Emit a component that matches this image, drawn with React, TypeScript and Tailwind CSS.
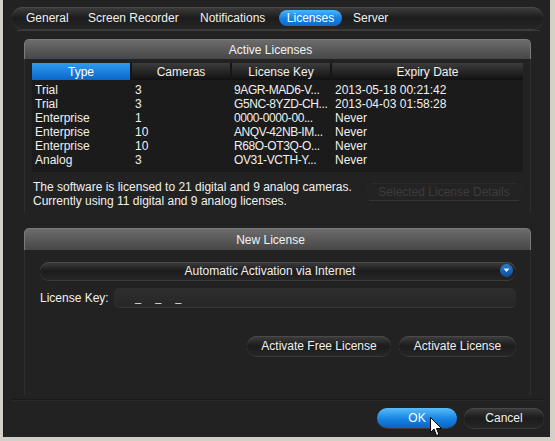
import React from "react";

const rows = [
  ["Trial", "3", "9AGR-MAD6-V...", "2013-05-18 00:21:42"],
  ["Trial", "3", "G5NC-8YZD-CH...", "2013-04-03 01:58:28"],
  ["Enterprise", "1", "0000-0000-00...", "Never"],
  ["Enterprise", "10", "ANQV-42NB-IM...", "Never"],
  ["Enterprise", "10", "R68O-OT3Q-O...", "Never"],
  ["Analog", "3", "OV31-VCTH-Y...", "Never"],
];

const darkPill =
  "rounded-full bg-gradient-to-b from-[#3e3e3e] via-[#1c1c1c] to-[#262626] shadow-[inset_0_1px_0_#4a4a4a,0_1px_0_#3a3a3a]";

function PanelHeader({ title, h }: { title: string; h: string }) {
  return (
    <div className={`${h} flex items-center justify-center pr-[14px] rounded-t-[5px] bg-gradient-to-b from-[#6c6c6c] to-[#474747] border-t border-x border-[#7a7a7a] text-[#f2f2f2]`}>
      {title}
    </div>
  );
}

export default function App() {
  return (
    <div className="w-[555px] h-[441px] bg-[#d4d0c8] pl-[3px] pr-[5px] pb-[4px] text-[12px] text-[#f0f0f0]" style={{ fontFamily: '"Liberation Sans", Arial, sans-serif' }}>
      <div className="relative h-full bg-[#222222] flex flex-col border-l border-[#1a1a1a]">
        {/* Tabs */}
        <div className={`mt-[7px] ml-[8px] mr-[7px] h-[22px] flex items-center pl-[14px] ${darkPill}`}>
          <span className="w-[62px]">General</span>
          <span className="w-[112px]">Screen Recorder</span>
          <span className="w-[79px]">Notifications</span>
          <span className="w-[63px] h-[16px] flex items-center justify-center rounded-full bg-gradient-to-b from-[#4cb3f7] via-[#1684e4] to-[#0d6bcc] text-white">
            Licenses
          </span>
          <span className="ml-[11px]">Server</span>
        </div>
        <div className="mt-[1px] ml-[13px] mr-[10px] h-px bg-[#3c3c3c]" />

        {/* Active Licenses */}
        <div className="mt-[8px] ml-[20px] w-[507px]">
          <PanelHeader title="Active Licenses" h="h-[20px]" />
          <div className="px-[7px] pt-[4px] pb-[5px] border-x border-[#2e2e2e]">
            <div className="h-[109px] bg-[#1b1b1b]">
              <div className="h-[17px] flex bg-gradient-to-b from-[#3c3c3c] via-[#262626] to-[#111111]">
                <div className="w-[98px] flex items-center justify-center bg-gradient-to-b from-[#2e9cf0] to-[#0a66c8] text-white">Type</div>
                <div className="w-[2px] bg-[#151515]" />
                <div className="w-[98px] flex items-center justify-center">Cameras</div>
                <div className="w-[2px] bg-[#151515]" />
                <div className="w-[98px] flex items-center justify-center">License Key</div>
                <div className="w-[2px] bg-[#151515]" />
                <div className="flex-1 flex items-center justify-center">Expiry Date</div>
              </div>
              <div className="pt-[3px]">
                {rows.map((r, i) => (
                  <div key={i} className="h-[14px] flex items-center leading-[14px] whitespace-nowrap">
                    <span className="w-[100px] pl-[3px]">{r[0]}</span>
                    <span className="w-[100px] pl-[3px]">{r[1]}</span>
                    <span className="w-[100px] pl-[2px] overflow-hidden tracking-[-0.4px]">{r[2]}</span>
                    <span className="pl-[3px]">{r[3]}</span>
                  </div>
                ))}
              </div>
            </div>
            <div className="mt-[8px] flex">
              <div className="flex-1 pl-[1px] leading-[14px]">
                <div>The software is licensed to 21 digital and 9 analog cameras.</div>
                <div>Currently using 11 digital and 9 analog licenses.</div>
              </div>
              <div className="mt-[3px] w-[158px]">
                <div className="h-[17px] flex items-center justify-center rounded-full bg-[#232323] shadow-[inset_0_1px_0_#2a2a2a] text-[#3d3d3d]">
                  Selected License Details
                </div>
                <div className="mx-[4px] h-px bg-[#333333]" />
              </div>
            </div>
          </div>
        </div>

        {/* New License */}
        <div className="mt-[15px] ml-[20px] w-[507px]">
          <PanelHeader title="New License" h="h-[22px]" />
          <div className="pl-[15px] pr-[14px] pt-[12px] pb-[39px] border-x border-[#2e2e2e]">
            <div className={`relative h-[18px] flex items-center justify-center pr-[16px] ${darkPill}`}>
              Automatic Activation via Internet
              <span className="absolute right-[3px] top-[2px] w-[13px] h-[13px] rounded-full bg-gradient-to-b from-[#2a7fd0] to-[#0c4c98] flex items-center justify-center">
                <svg width="7" height="5" viewBox="0 0 7 5"><path d="M0.5 0.5h6L3.5 4z" fill="#e8f2ff" /></svg>
              </span>
            </div>
            <div className="mt-[8px] flex items-center">
              <span className="w-[74px]">License Key:</span>
              <div className="flex-1 h-[19px] rounded-[6px] bg-gradient-to-b from-[#2f2f2f] to-[#262626] shadow-[0_1px_0_#3a3a3a] flex items-end pb-[3px] pl-[21px] gap-[14px] text-[11px] leading-none">
                <span>_</span><span>_</span><span>_</span>
              </div>
            </div>
            <div className="mt-[29px] flex justify-end gap-[8px]">
              <div className={`w-[144px] h-[20px] flex items-center justify-center ${darkPill}`}>Activate Free License</div>
              <div className={`w-[117px] h-[20px] flex items-center justify-center ${darkPill}`}>Activate License</div>
            </div>
          </div>
        </div>

        <div className="mt-[4px] ml-[8px] mr-[7px] h-px bg-[#1a1a1a] shadow-[0_1px_0_#2a2a2a]" />

        <div className="mt-[8px] mr-[6px] flex justify-end gap-[7px]">
          <div className="w-[80px] h-[20px] flex items-center justify-center rounded-full bg-gradient-to-b from-[#58bdf9] via-[#1a88e6] to-[#0a62c4] shadow-[0_1px_0_#3a3a3a] text-white">OK</div>
          <div className={`w-[80px] h-[20px] flex items-center justify-center ${darkPill}`}>Cancel</div>
        </div>

        {/* Mouse cursor */}
        <svg className="absolute left-[426px] top-[417px]" width="13" height="20" viewBox="0 0 13 20">
          <path d="M0.5 0.5 L0.5 15.5 L4 12 L6.5 18.5 L9 17.5 L6.5 11.5 L11.5 11.5 Z" fill="#ffffff" stroke="#000000" strokeWidth="1" strokeLinejoin="round" />
        </svg>
      </div>
    </div>
  );
}
